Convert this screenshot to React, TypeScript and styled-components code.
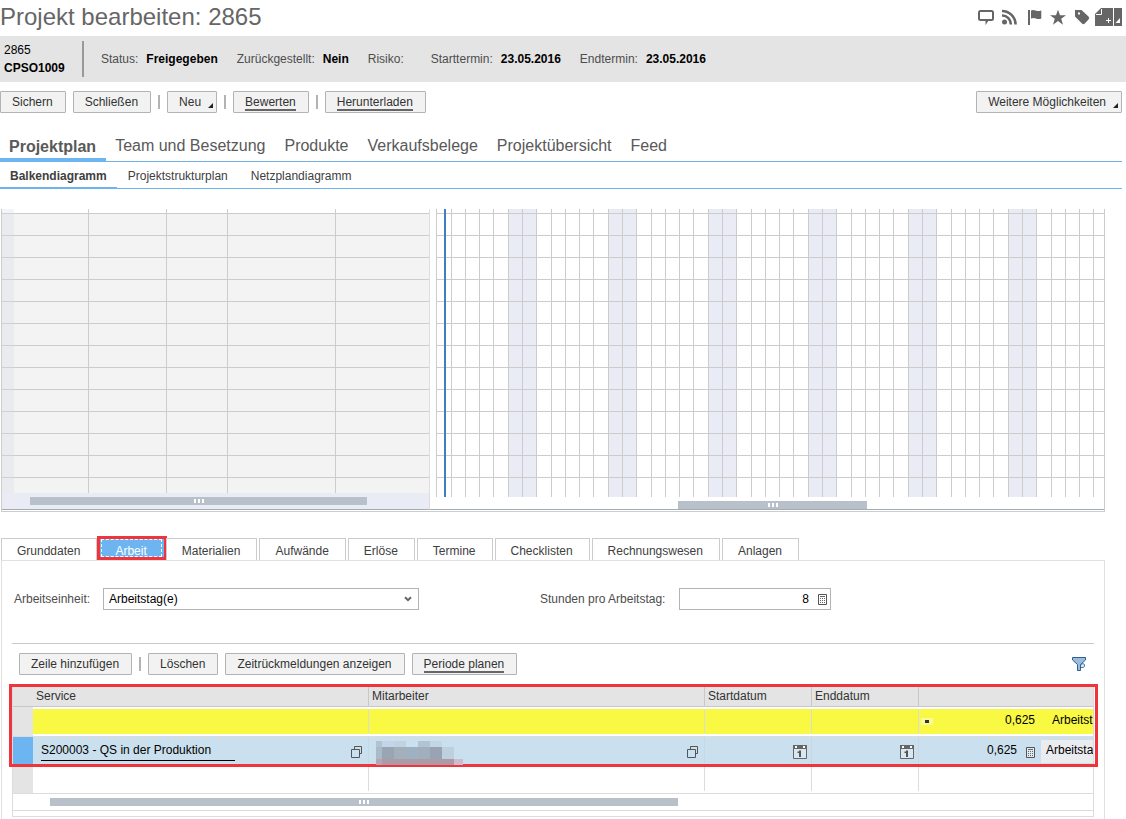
import React from 'react';
import styled, { createGlobalStyle, css } from 'styled-components';

const GlobalStyle = createGlobalStyle`
  *, *::before, *::after { box-sizing: border-box; }
  body { margin: 0; background: #fff; }
  body, button, input, select {
    font-family: "Liberation Sans", Arial, sans-serif;
    font-size: 12px;
    color: #333;
  }
`;

const Page = styled.div`
  display: flex;
  flex-direction: column;
  min-height: 100vh;
  overflow: hidden;
  line-height: 18px;
`;

const Top = styled.div`
  margin-right: 4px;
`;

const TitleBar = styled.header`
  display: flex;
  justify-content: space-between;
  height: 36px;
`;

const Title = styled.h1`
  margin: 0;
  font-size: 24px;
  font-weight: 400;
  line-height: 34px;
  color: #666;
`;

const IconBar = styled.div`
  display: flex;
  gap: 5px;
  padding-top: 8px;
`;

const IconGroup = styled.div<{ $gap: number }>`
  display: flex;
  gap: ${(p) => p.$gap}px;
`;

const IconButton = styled.button`
  display: flex;
  align-items: center;
  height: 18px;
  padding: 0;
  border: 0;
  background: none;
  color: #666;

  svg { display: block; }
`;

const InfoBar = styled.section`
  display: flex;
  align-items: center;
  height: 46px;
  margin-right: -4px;
  padding-left: 4px;
  background: #e4e4e4;
  color: #000;
`;

const ProjectId = styled.div`
  display: flex;
  flex-direction: column;
  justify-content: center;
  width: 80px;
  height: 36px;
  border-right: 2px solid #999;
`;

const Facts = styled.dl`
  display: flex;
  gap: 19px;
  margin: 0 0 0 17px;
`;

const Fact = styled.div`
  display: flex;
  gap: 8px;

  dt { color: #4d4d4d; }
  dd { margin: 0; font-weight: 700; }
`;

const Toolbar = styled.div`
  display: flex;
  align-items: center;
  gap: 7px;
  margin-top: 9px;
`;

const Spacer = styled.span`
  flex: 1;
`;

const Separator = styled.span`
  width: 2px;
  height: 14px;
  background: #b3b3b3;
`;

const Button = styled.button<{ $menu?: boolean }>`
  display: flex;
  gap: 7px;
  height: 22px;
  padding: 0 ${(p) => (p.$menu ? 3 : 12)}px 0 11px;
  border: 1px solid #b3b3b3;
  border-radius: 1px;
  background: #f2f2f2;
  line-height: 20px;
  white-space: nowrap;

  svg { align-self: flex-end; margin-bottom: 4px; }
`;

const Underlined = styled.span`
  height: 19px;
  border-bottom: 2px solid #666;
`;

const MainTabs = styled.nav`
  display: flex;
  align-items: flex-end;
  height: 49px;
  border-bottom: 1px solid #6fb3e6;
`;

const MainTab = styled.a<{ $active?: boolean }>`
  height: 29px;
  margin-bottom: -1px;
  padding: 0 10px 0 9px;
  font-size: 16px;
  line-height: 26px;
  color: #595959;
  text-decoration: none;
  white-space: nowrap;
  ${(p) =>
    p.$active &&
    css`
      border-bottom: 4px solid #6db5f0;
      font-weight: 700;
      line-height: 28px;
    `}
`;

const SubTabs = styled.nav`
  display: flex;
  height: 27px;
  border-bottom: 1px solid #6db5f0;
`;

const SubTab = styled.a<{ $active?: boolean }>`
  height: 27px;
  padding: 0 12px 0 11px;
  line-height: 28px;
  color: #404040;
  text-decoration: none;
  white-space: nowrap;
  ${(p) =>
    p.$active &&
    css`
      padding: 0 10px;
      border-bottom: 2px solid #6db5f0;
      font-weight: 700;
    `}
`;

const Gantt = styled.section`
  display: flex;
  height: 303px;
  margin: 20px 21px 0 1px;
  padding-bottom: 1px;
  border: 1px solid #ccc;
  border-top: 0;
`;

const GanttTree = styled.div`
  display: flex;
  flex-direction: column;
  flex: none;
  width: 428px;
  border-right: 1px solid #ddd;
  border-bottom: 1px solid #a0adb5;
`;

const TreeGrid = styled.div`
  display: flex;
  height: 284px;
  background: repeating-linear-gradient(transparent 0 4px, #ccc 4px 5px, transparent 5px 22px),
    linear-gradient(#fff 4px, #f3f3f3 4px);
`;

const TreeColumn = styled.div<{ $width?: number; $handle?: boolean }>`
  flex: ${(p) => (p.$width ? `0 0 ${p.$width}px` : '1')};
  border-right: ${(p) => (p.$width && !p.$handle ? '1px solid #ccc' : '0')};
  background: ${(p) => (p.$handle ? 'rgba(214, 220, 228, 0.3)' : 'none')};
`;

const TreeScroll = styled.div`
  display: grid;
  grid-template-columns: 28px 337fr 62fr;
  align-items: center;
  flex: 1;
  background: #e9ecf5;
`;

const GanttChart = styled.div`
  display: flex;
  flex-direction: column;
  flex: 1;
  min-width: 0;
  border-bottom: 1px solid #a0adb5;
`;

const ChartGrid = styled.div`
  position: relative;
  display: flex;
  height: 288px;
  margin-left: 6px;
  overflow: hidden;
  border-left: 1px solid #ccc;

  &::after {
    content: '';
    position: absolute;
    inset: 0;
    background: repeating-linear-gradient(transparent 0 4px, #ccc 4px 5px, transparent 5px 22px);
  }
`;

const Day = styled.div<{ $width: number; $weekend: boolean }>`
  flex: 0 0 ${(p) => p.$width}px;
  border-right: 1px solid #ccc;
  background: ${(p) => (p.$weekend ? '#e9ecf5' : '#fff')};
`;

const TodayLine = styled.div`
  position: absolute;
  z-index: 1;
  top: 0;
  bottom: 0;
  left: 7px;
  width: 2px;
  background: #3f7fbf;
`;

const ChartScroll = styled.div`
  display: grid;
  grid-template-columns: 248fr 189fr 237fr;
  align-items: end;
  flex: 1;
`;

const Thumb = styled.div`
  display: flex;
  grid-column: 2;
  align-items: center;
  justify-content: center;
  gap: 2px;
  height: 8px;
  background: #b8c1ca;

  i { width: 2px; height: 4px; background: #fff; }
`;

const DetailTabs = styled.div`
  display: flex;
  gap: 2px;
  margin: 26px 21px 0 1px;
`;

const DetailTab = styled.button<{ $active?: boolean }>`
  position: relative;
  height: 22px;
  padding: 2px 16px 0 15px;
  border: 1px solid #ccc;
  border-bottom: 0;
  background: #fff;
  line-height: 18px;
  color: #404040;
  white-space: nowrap;
  ${(p) =>
    p.$active &&
    css`
      border-color: #6db5f0;
      background: #6db5f0;
      color: #fff;

      &::before {
        content: '';
        position: absolute;
        inset: 0 1px 3px;
        border: 1px dashed #fff;
      }
    `}
`;

const TabMark = styled.span`
  position: absolute;
  inset: -3px -4px 0 -3px;
  border: 3px solid #ef343b;
`;

const Panel = styled.section`
  flex: 1;
  margin: 0 21px 0 1px;
  padding: 27px 10px 0;
  border: 1px solid #e0e0e0;
  border-bottom: 0;
`;

const Form = styled.form`
  display: flex;
  gap: 121px;
  padding: 0 2px 33px;
`;

const Field = styled.div<{ $label: number }>`
  display: flex;
  line-height: 22px;

  label { flex: none; width: ${(p) => p.$label}px; color: #4d4d4d; }
`;

const Control = styled.div<{ $width: number }>`
  display: flex;
  align-items: center;
  width: ${(p) => p.$width}px;
  height: 22px;
  border: 1px solid #b3b3b3;
  position: relative;

  svg { position: absolute; pointer-events: none; }
`;

const Select = styled.select`
  appearance: none;
  width: 100%;
  height: 20px;
  padding: 0 20px 0 5px;
  border: 0;
  background: #fff;
  color: #000;
`;

const NumberInput = styled.input`
  width: 100%;
  height: 20px;
  padding: 0 21px 0 4px;
  border: 0;
  text-align: right;
  color: #000;
`;

const TableBar = styled(Toolbar)`
  margin: 0;
  padding: 9px 8px 10px 7px;
  border-top: 1px solid #c8c8c8;
`;

const TableFrame = styled.div`
  position: relative;
  padding-bottom: 5px;
  border: 1px solid #dcdcdc;
  border-top: 0;
`;

const TableMark = styled.div`
  position: absolute;
  top: -1px;
  right: -5px;
  left: -4px;
  height: 83px;
  border: 3px solid #ef343b;
  pointer-events: none;
`;

const Table = styled.table`
  width: 100%;
  table-layout: fixed;
  border-collapse: separate;
  border-spacing: 0;

  th {
    height: 22px;
    padding: 0 0 0 3px;
    border-right: 1px solid #c8c8c8;
    border-bottom: 1px solid #c8c8c8;
    background: #e4e4e4;
    font-weight: 400;
    line-height: 20px;
    text-align: left;
    color: #333;
  }
  th:first-child, th:last-child { border-right: 0; }
`;

const Row = styled.tr<{ $kind: 'total' | 'selected' | 'empty' }>`
  td {
    padding: 2px 0;
    border-bottom: 1px solid #dcdcdc;
    vertical-align: top;
    ${(p) => p.$kind === 'selected' && 'padding: 0; background: #cbe0ee;'}
  }
  td:first-child {
    background: ${(p) => (p.$kind === 'selected' ? '#6db5f0' : '#e4e4e4')};
  }
`;

const rowLook = {
  total: css`height: 25px; padding-bottom: 3px; background: #f9f943; line-height: 22px;`,
  selected: css`height: 27px; background: #cbe0ee; line-height: 26px;`,
  empty: css`height: 24px;`,
};

const Cell = styled.div<{ $kind: 'total' | 'selected' | 'empty'; $last?: boolean; $icon?: number }>`
  position: relative;
  display: flex;
  align-items: center;
  justify-content: space-between;
  padding-right: ${(p) => p.$icon ?? 0}px;
  border-right: ${(p) => (p.$last ? 0 : 1)}px solid ${(p) => (p.$kind === 'selected' ? '#c8d8e2' : '#dcdcdc')};
  color: #000;
  ${(p) => rowLook[p.$kind]}

  > svg { margin-top: 2px; }
`;

const ServiceInput = styled.input`
  width: 194px;
  height: 20px;
  margin-left: 8px;
  padding: 0;
  border: 0;
  border-bottom: 1px solid #000;
  background: none;
  color: #000;
`;

const AmountInput = styled.input`
  width: 98px;
  height: 20px;
  padding: 0 0 2px;
  border: 0;
  background: none;
  text-align: right;
  color: #000;
`;

const Amount = styled.div`
  display: flex;
  flex: none;
  align-items: center;
  justify-content: space-between;
  width: 116px;

  svg { margin-top: 4px; }
`;

const Dot = styled.span`
  display: grid;
  place-items: center;
  width: 12px;
  height: 7px;
  margin: 3px 2px 0;
  background: #fafa96;

  &::before { content: ''; width: 4px; height: 3px; background: #333; }
`;

const Unit = styled.div<{ $boxed?: boolean }>`
  flex: 1;
  min-width: 0;
  overflow: hidden;
  white-space: nowrap;
  padding-left: 17px;
  ${(p) =>
    p.$boxed &&
    css`
      height: 23px;
      margin: 2px 0 0 6px;
      padding-left: 5px;
      background: #ebecf0;
      line-height: 20px;
    `}
`;

const TableScroll = styled.div`
  display: grid;
  grid-template-columns: 37px 628fr 415fr;
  padding: 4px 0;
  border-bottom: 1px solid #dcdcdc;
`;

const Mosaic = styled.svg`
  position: absolute;
  z-index: 1;
  top: 2px;
  left: 7px;
`;

const Corner = () => (
  <svg width="5" height="5" viewBox="0 0 5 5" aria-hidden="true">
    <path d="M5 0V5H0Z" fill="#222" />
  </svg>
);

const Grip = () => (
  <Thumb>
    <i />
    <i />
    <i />
  </Thumb>
);

const CalcIcon = ({ right }: { right?: number }) => (
  <svg width="9" height="11" viewBox="0 0 9 11" style={right ? { right } : undefined} aria-hidden="true">
    <path d="M.5 .5H8.500V10.500H.5Z" fill="#fff" fillOpacity=".4" stroke="#555" />
    <path d="M2 2.500H7" stroke="#666" />
    <path d="M2 4.500H7M2 6.500H7M2 8.500H7" stroke="#666" strokeDasharray="1 1" />
  </svg>
);

const CopyIcon = () => (
  <svg width="11" height="12" viewBox="0 0 11 12" aria-hidden="true">
    <path d="M3.500 3V.5H10.500V7.500H8.500M.5 3.500H8.500V11.500H.5Z" fill="none" stroke="#555" />
  </svg>
);

const CalendarIcon = () => (
  <svg width="14" height="14" viewBox="0 0 14 14" aria-hidden="true">
    <path d="M.5 .5H13.500V13.500H.5Z" fill="#d8e8f2" stroke="#666" />
    <path d="M0 0H14V4H0Z" fill="#666" />
    <path d="M2 1H4V3H2ZM10 1H12V3H10Z" fill="#fff" />
    <path d="M4.500 6.500H6V5.500H8V12H6V8H4.500Z" fill="#555" />
  </svg>
);

const weekDays = [14, 14, 15, 14, 14, 14, 15];
const leadDays = [15, 14, 14, 14, 15];
const days = [
  ...leadDays.map((width) => ({ width, weekend: false })),
  ...Array.from({ length: 20 }).flatMap(() => weekDays.map((width, i) => ({ width, weekend: i < 2 }))),
];

const facts = [
  ['Status:', 'Freigegeben'],
  ['Zurückgestellt:', 'Nein'],
  ['Risiko:', ''],
  ['Starttermin:', '23.05.2016'],
  ['Endtermin:', '23.05.2016'],
];
const mainTabs = ['Projektplan', 'Team und Besetzung', 'Produkte', 'Verkaufsbelege', 'Projektübersicht', 'Feed'];
const subTabs = ['Balkendiagramm', 'Projektstrukturplan', 'Netzplandiagramm'];
const detailTabs = [
  'Grunddaten', 'Arbeit', 'Materialien', 'Aufwände', 'Erlöse',
  'Termine', 'Checklisten', 'Rechnungswesen', 'Anlagen',
];

const blocks: [number, number, number, number, string][] = [
  [0, 0, 6, 6, '#b2c3d0'], [6, 0, 12, 6, '#c3d5e6'], [18, 0, 12, 6, '#c0d3e2'],
  [42, 0, 12, 6, '#b1c4d4'], [54, 0, 12, 6, '#c3d6e6'],
  [0, 6, 6, 12, '#a9bbc6'], [6, 6, 12, 12, '#97a6b2'], [18, 6, 12, 12, '#a3b0ba'],
  [30, 6, 12, 12, '#9eb0c1'], [42, 6, 12, 12, '#a1aebb'], [54, 6, 12, 12, '#98a3b3'],
  [66, 6, 12, 12, '#bed0dd'],
  [0, 18, 6, 6, '#b8a5b3'], [6, 18, 72, 6, '#ac9ba7'], [78, 18, 9, 6, '#ccbccc'],
];

export default function App() {
  return (
    <Page>
      <GlobalStyle />
      <Top>
        <TitleBar>
          <Title>Projekt bearbeiten: 2865</Title>
          <IconBar>
            <IconGroup $gap={8}>
              <IconButton aria-label="Kommentar">
                <svg width="16" height="16" viewBox="0 0 16 16">
                  <path d="M2.500 2H13.500Q15 2 15 3.500V9.500Q15 11 13.500 11H2.500Q1 11 1 9.500V3.500Q1 2 2.500 2Z" fill="none" stroke="currentColor" strokeWidth="2" />
                  <path d="M6 11H11L7.500 16V12Z" fill="currentColor" />
                </svg>
              </IconButton>
              <IconButton aria-label="Feed">
                <svg width="16" height="16" viewBox="0 0 16 16">
                  <circle cx="2.500" cy="13" r="2.500" fill="currentColor" />
                  <path d="M0 6.500A8.500 8.500 0 0 1 8.800 15.500M0 2A13.500 13.500 0 0 1 13.500 15.500" fill="none" stroke="currentColor" strokeWidth="2.600" />
                </svg>
              </IconButton>
              <IconButton aria-label="Kennzeichen">
                <svg width="16" height="16" viewBox="0 0 16 16">
                  <path d="M2 1H4V16H2ZM5 1.500Q7 .5 9.500 1.500T15.300 1.500V9.500Q12.500 10.500 10 9.500T5 9.500Z" fill="currentColor" />
                </svg>
              </IconButton>
              <IconButton aria-label="Favorit">
                <svg width="16" height="16" viewBox="0 0 16 16">
                  <path d="M8 .7 10 6.200H16L11.200 9.700 13 15.700 8 12 3 15.700 4.800 9.700 0 6.200H6Z" fill="currentColor" />
                </svg>
              </IconButton>
              <IconButton aria-label="Schlagwort">
                <svg width="16" height="16" viewBox="0 0 16 16">
                  <path fillRule="evenodd" d="M1 1H7.500L14.500 7.500Q16 9 14.500 10.500L10.800 14.500Q9.500 15.800 8 14.500L1 7.500ZM4 3.500V5.500H6V3.500Z" fill="currentColor" />
                </svg>
              </IconButton>
            </IconGroup>
            <IconGroup $gap={1}>
              <IconButton aria-label="Neues Dokument">
                <svg width="18" height="18" viewBox="0 0 18 18">
                  <path d="M6 0H18V18H0V6Z" fill="currentColor" />
                  <path d="M6.500 1V6.500H1M11 12.500H16M13.500 10V15" fill="none" stroke="#fff" />
                </svg>
              </IconButton>
              <IconButton aria-label="Weitere Dokumente">
                <svg width="8" height="18" viewBox="0 0 8 18">
                  <path d="M0 0H8V18H0Z" fill="currentColor" />
                  <path d="M6 10V15H1.500Z" fill="#fff" />
                </svg>
              </IconButton>
            </IconGroup>
          </IconBar>
        </TitleBar>

        <InfoBar>
          <ProjectId>
            <span>2865</span>
            <strong>CPSO1009</strong>
          </ProjectId>
          <Facts>
            {facts.map(([label, value]) => (
              <Fact key={label}>
                <dt>{label}</dt>
                <dd>{value}</dd>
              </Fact>
            ))}
          </Facts>
        </InfoBar>

        <Toolbar>
          <Button>Sichern</Button>
          <Button>Schließen</Button>
          <Separator />
          <Button $menu>Neu<Corner /></Button>
          <Separator />
          <Button><Underlined>Bewerten</Underlined></Button>
          <Separator />
          <Button><Underlined>Herunterladen</Underlined></Button>
          <Spacer />
          <Button $menu>Weitere Möglichkeiten<Corner /></Button>
        </Toolbar>

        <MainTabs>
          {mainTabs.map((tab, i) => (
            <MainTab key={tab} href="#" $active={i === 0}>{tab}</MainTab>
          ))}
        </MainTabs>
        <SubTabs>
          {subTabs.map((tab, i) => (
            <SubTab key={tab} href="#" $active={i === 0}>{tab}</SubTab>
          ))}
        </SubTabs>
      </Top>

      <Gantt>
        <GanttTree>
          <TreeGrid>
            <TreeColumn $width={12} $handle />
            <TreeColumn $width={75} />
            <TreeColumn $width={78} />
            <TreeColumn $width={61} />
            <TreeColumn $width={108} />
            <TreeColumn />
          </TreeGrid>
          <TreeScroll><Grip /></TreeScroll>
        </GanttTree>
        <GanttChart>
          <ChartGrid>
            {days.map((day, i) => (
              <Day key={i} $width={day.width} $weekend={day.weekend} />
            ))}
            <TodayLine />
          </ChartGrid>
          <ChartScroll><Grip /></ChartScroll>
        </GanttChart>
      </Gantt>

      <DetailTabs role="tablist">
        {detailTabs.map((tab) => (
          <DetailTab key={tab} role="tab" aria-selected={tab === 'Arbeit'} $active={tab === 'Arbeit'}>
            {tab}
            {tab === 'Arbeit' && <TabMark />}
          </DetailTab>
        ))}
      </DetailTabs>

      <Panel>
        <Form>
          <Field $label={89}>
            <label htmlFor="unit">Arbeitseinheit:</label>
            <Control $width={316}>
              <Select id="unit" defaultValue="day">
                <option value="day">Arbeitstag(e)</option>
              </Select>
              <svg width="8" height="6" viewBox="0 0 8 6" style={{ right: 6 }} aria-hidden="true">
                <path d="M1 1.200 4 4.200 7 1.200" fill="none" stroke="#666" strokeWidth="2" />
              </svg>
            </Control>
          </Field>
          <Field $label={139}>
            <label htmlFor="hours">Stunden pro Arbeitstag:</label>
            <Control $width={152}>
              <NumberInput id="hours" defaultValue="8" />
              <CalcIcon right={3} />
            </Control>
          </Field>
        </Form>

        <TableBar>
          <Button>Zeile hinzufügen</Button>
          <Separator />
          <Button>Löschen</Button>
          <Button>Zeitrückmeldungen anzeigen</Button>
          <Button><Underlined>Periode planen</Underlined></Button>
          <Spacer />
          <IconButton aria-label="Filter">
            <svg width="14" height="14" viewBox="0 0 14 14">
              <path d="M.5 .5H13.500V3L8.500 7.500V13.500H5.500V7.500L.5 3Z" fill="#9dbbdc" stroke="#2f608f" />
              <path d="M9 7.500 11 6.500 12.500 7.500V9.500L11 10.500H9" fill="#dce9f5" stroke="#3f79ad" />
            </svg>
          </IconButton>
        </TableBar>

        <TableFrame>
          <Table>
            <colgroup>
              <col width="20" />
              <col width="336" />
              <col width="336" />
              <col width="107" />
              <col width="107" />
              <col />
            </colgroup>
            <thead>
              <tr>
                <th aria-label="Auswahl" />
                <th>Service</th>
                <th>Mitarbeiter</th>
                <th>Startdatum</th>
                <th>Enddatum</th>
                <th aria-label="Aufwand" />
              </tr>
            </thead>
            <tbody>
              <Row $kind="total">
                <td />
                <td><Cell $kind="total" /></td>
                <td><Cell $kind="total" /></td>
                <td><Cell $kind="total" /></td>
                <td><Cell $kind="total" /></td>
                <td>
                  <Cell $kind="total" $last>
                    <Amount><Dot />0,625</Amount>
                    <Unit>Arbeitst</Unit>
                  </Cell>
                </td>
              </Row>
              <Row $kind="selected">
                <td />
                <td>
                  <Cell $kind="selected" $icon={6}>
                    <ServiceInput aria-label="Service" defaultValue="S200003 - QS in der Produktion" />
                    <CopyIcon />
                  </Cell>
                </td>
                <td>
                  <Cell $kind="selected" $icon={6}>
                    <Mosaic width="87" height="24" viewBox="0 0 87 24" shapeRendering="crispEdges" aria-hidden="true">
                      {blocks.map(([x, y, w, h, fill]) => (
                        <rect key={`${x}-${y}`} x={x} y={y} width={w} height={h} fill={fill} />
                      ))}
                    </Mosaic>
                    <span />
                    <CopyIcon />
                  </Cell>
                </td>
                <td><Cell $kind="selected" $icon={4}><span /><CalendarIcon /></Cell></td>
                <td><Cell $kind="selected" $icon={4}><span /><CalendarIcon /></Cell></td>
                <td>
                  <Cell $kind="selected" $last>
                    <Amount>
                      <AmountInput aria-label="Aufwand" defaultValue="0,625" />
                      <CalcIcon />
                    </Amount>
                    <Unit $boxed>Arbeitsta</Unit>
                  </Cell>
                </td>
              </Row>
              <Row $kind="empty">
                <td />
                <td><Cell $kind="empty" /></td>
                <td><Cell $kind="empty" /></td>
                <td><Cell $kind="empty" /></td>
                <td><Cell $kind="empty" /></td>
                <td><Cell $kind="empty" $last /></td>
              </Row>
            </tbody>
          </Table>
          <TableScroll><Grip /></TableScroll>
          <TableMark />
        </TableFrame>
      </Panel>
    </Page>
  );
}
